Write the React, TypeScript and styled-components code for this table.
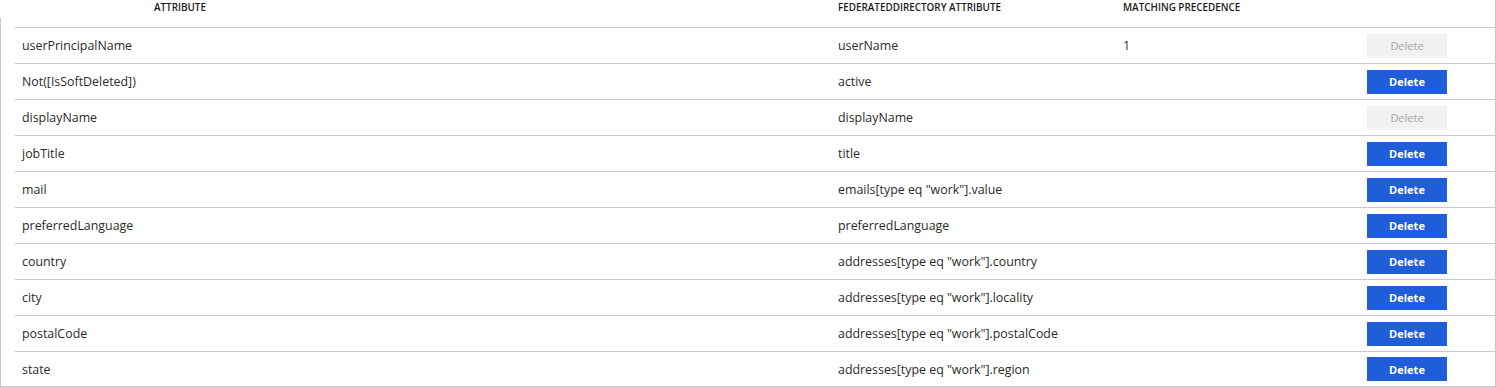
import React from "react";
import styled, { createGlobalStyle } from "styled-components";

const GlobalStyle = createGlobalStyle`
  html, body {
    margin: 0;
    padding: 0;
    background: #ffffff;
  }
  body {
    font-family: "Open Sans", "Noto Sans", sans-serif;
    color: #323130;
  }
`;

const Frame = styled.div`
  display: flex;
  width: 100%;
  height: 387px;
  box-sizing: border-box;
  border-right: 1px solid #c8c8c8;
  border-bottom: 1px solid #c8c8c8;
  overflow: hidden;
`;

const Rail = styled.div`
  width: 1px;
  margin-top: 18px;
  background: #c8c8c8;
  flex: none;
`;

const Table = styled.div`
  flex: 1;
  padding-left: 14px;
  display: flex;
  flex-direction: column;
`;

const Grid = styled.div`
  display: grid;
  grid-template-columns: 816px 285px 244px 1fr;
  align-items: center;
`;

const HeaderRow = styled(Grid)`
  height: 27px;
  border-bottom: 1px solid #c8c8c8;
  align-items: start;
`;

const HeadCell = styled.div<{ $indent?: number }>`
  padding-left: ${(p) => 7 + (p.$indent ?? 0)}px;
  padding-top: 1px;
  font-size: 9.9px;
  font-weight: 600;
  letter-spacing: 0;
  text-transform: uppercase;
  color: #1b1b1b;
  line-height: 12px;
  white-space: nowrap;
`;

const Row = styled(Grid)`
  height: 35px;
  border-bottom: 1px solid #c8c8c8;
  &:last-child {
    height: 34px;
    border-bottom: none;
  }
`;

const Cell = styled.div`
  padding-left: 7px;
  padding-top: 1px;
  font-size: 12.4px;
  line-height: 16px;
  color: #2b2b2b;
  white-space: nowrap;
`;

const ActionCell = styled.div`
  padding-left: 7px;
  display: flex;
  align-items: center;
`;

const DeleteButton = styled.button<{ $disabled?: boolean }>`
  width: 80px;
  height: 24px;
  border: none;
  padding: 0;
  font-family: "Open Sans", "Noto Sans", sans-serif;
  font-size: 11px;
  font-weight: ${(p) => (p.$disabled ? 400 : 700)};
  color: ${(p) => (p.$disabled ? "#a6a6a6" : "#ffffff")};
  background: ${(p) => (p.$disabled ? "#f1f1f1" : "#1f5ed8")};
  cursor: ${(p) => (p.$disabled ? "default" : "pointer")};
`;

type Mapping = {
  source: string;
  target: string;
  precedence?: string;
  locked?: boolean;
};

const mappings: Mapping[] = [
  { source: "userPrincipalName", target: "userName", precedence: "1", locked: true },
  { source: "Not([IsSoftDeleted])", target: "active" },
  { source: "displayName", target: "displayName", locked: true },
  { source: "jobTitle", target: "title" },
  { source: "mail", target: 'emails[type eq "work"].value' },
  { source: "preferredLanguage", target: "preferredLanguage" },
  { source: "country", target: 'addresses[type eq "work"].country' },
  { source: "city", target: 'addresses[type eq "work"].locality' },
  { source: "postalCode", target: 'addresses[type eq "work"].postalCode' },
  { source: "state", target: 'addresses[type eq "work"].region' },
];

export default function App() {
  return (
    <>
      <GlobalStyle />
      <Frame>
        <Rail />
        <Table>
          <HeaderRow>
            <HeadCell $indent={132}>Attribute</HeadCell>
            <HeadCell>FederatedDirectory Attribute</HeadCell>
            <HeadCell>Matching Precedence</HeadCell>
            <HeadCell />
          </HeaderRow>
          {mappings.map((m) => (
            <Row key={m.source}>
              <Cell>{m.source}</Cell>
              <Cell>{m.target}</Cell>
              <Cell>{m.precedence ?? ""}</Cell>
              <ActionCell>
                <DeleteButton $disabled={m.locked} disabled={m.locked}>
                  Delete
                </DeleteButton>
              </ActionCell>
            </Row>
          ))}
        </Table>
      </Frame>
    </>
  );
}
